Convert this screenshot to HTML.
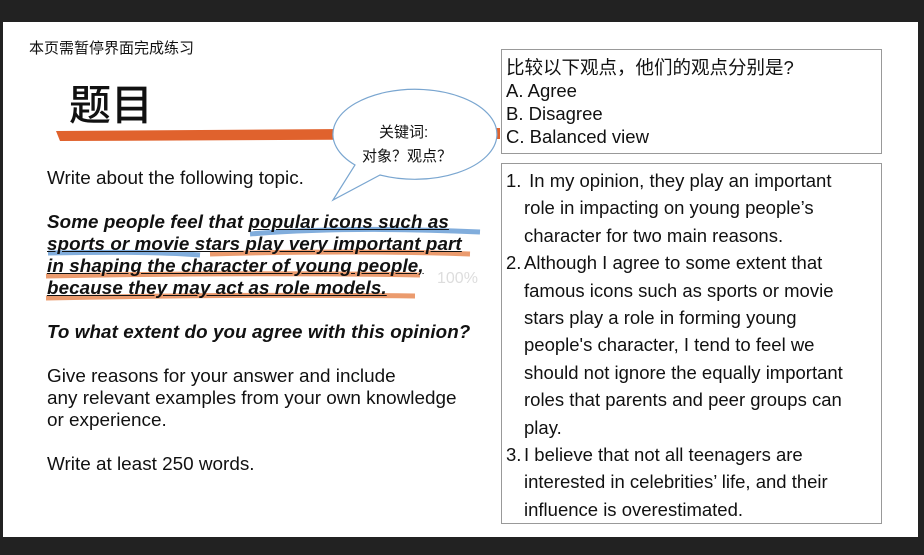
<!DOCTYPE html>
<html><head><meta charset="utf-8"><style>
body{margin:0;width:924px;height:555px;background:#222;position:relative;overflow:hidden;font-family:"Liberation Sans","Noto Sans CJK SC",sans-serif;color:#111}
#w{position:absolute;left:3px;top:22px;width:915px;height:515px;background:#fff}
.a{position:absolute;white-space:nowrap}
.box{position:absolute;border:1.5px solid #999;background:#fff}
.bi{font-weight:bold;font-style:italic;font-size:18.8px;letter-spacing:0.1px}
</style></head><body>
<div id="w"></div>
<div class="a" style="left:29px;top:37px;font-size:15px">本页需暂停界面完成练习</div>
<div class="a" style="left:69px;top:72px;font-size:42px;font-weight:500">题目</div>
<svg class="a" style="left:0;top:0" width="924" height="555">
<path d="M56 131 L500 128 L500 139 L60 141 Z" fill="#e0622d"/>
<path d="M250 234 Q350 226 480 232" stroke="#6b9fd6" stroke-width="5" fill="none" opacity=".85"/>
<path d="M48 253 Q150 251 200 255" stroke="#6b9fd6" stroke-width="5" fill="none" opacity=".85"/>
<path d="M210 254 Q350 250 470 254 M46 276 Q250 272 420 275 M46 298 Q250 294 415 296" stroke="#e88a55" stroke-width="5" fill="none" opacity=".85"/>
<path d="M333 200 L355 165 A82 45 0 1 1 380 175 Z" fill="#fff" stroke="#7aa6d0" stroke-width="1.2"/>
</svg>
<div class="a" style="left:379px;top:121px;font-size:15px">关键词:</div>
<div class="a" style="left:362px;top:145px;font-size:15px">对象？观点？</div>
<div class="a" style="left:47px;top:168px;font-size:18.9px">Write about the following topic.</div>
<div class="a bi" style="left:47px;top:211px;line-height:22px">Some people feel that <u>popular icons such as</u><br><u>sports or movie stars play very important part</u><br><u>in shaping the character of young people,</u><br><u>because they may act as role models.</u></div>
<div class="a" style="left:437px;top:270px;font-size:16px;color:#ddd">100%</div>
<div class="a bi" style="left:47px;top:321px">To what extent do you agree with this opinion?</div>
<div class="a" style="left:47px;top:366px;font-size:18.9px;line-height:22px">Give reasons for your answer and include<br>any relevant examples from your own knowledge<br>or experience.</div>
<div class="a" style="left:47px;top:454px;font-size:18.9px">Write at least 250 words.</div>
<div class="box" style="left:501px;top:49px;width:379px;height:103px">
<div class="a" style="left:4px;top:6px;font-size:18.5px;line-height:23px">比较以下观点，他们的观点分别是?<br>A. Agree<br>B. Disagree<br>C. Balanced view</div></div>
<div class="box" style="left:501px;top:163px;width:379px;height:359px;font-size:18.5px">
<div class="a" style="left:4px;top:3px;line-height:27.4px">1.<br><br><br>2.<br><br><br><br><br><br><br>3.</div>
<div class="a" style="left:22px;top:3px;line-height:27.4px">&nbsp;In my opinion, they play an important<br>role in impacting on young people’s<br>character for two main reasons.<br>Although I agree to some extent that<br>famous icons such as sports or movie<br>stars play a role in forming young<br>people's character, I tend to feel we<br>should not ignore the equally important<br>roles that parents and peer groups can<br>play.<br>I believe that not all teenagers are<br>interested in celebrities’ life, and their<br>influence is overestimated.</div></div>
</body></html>
